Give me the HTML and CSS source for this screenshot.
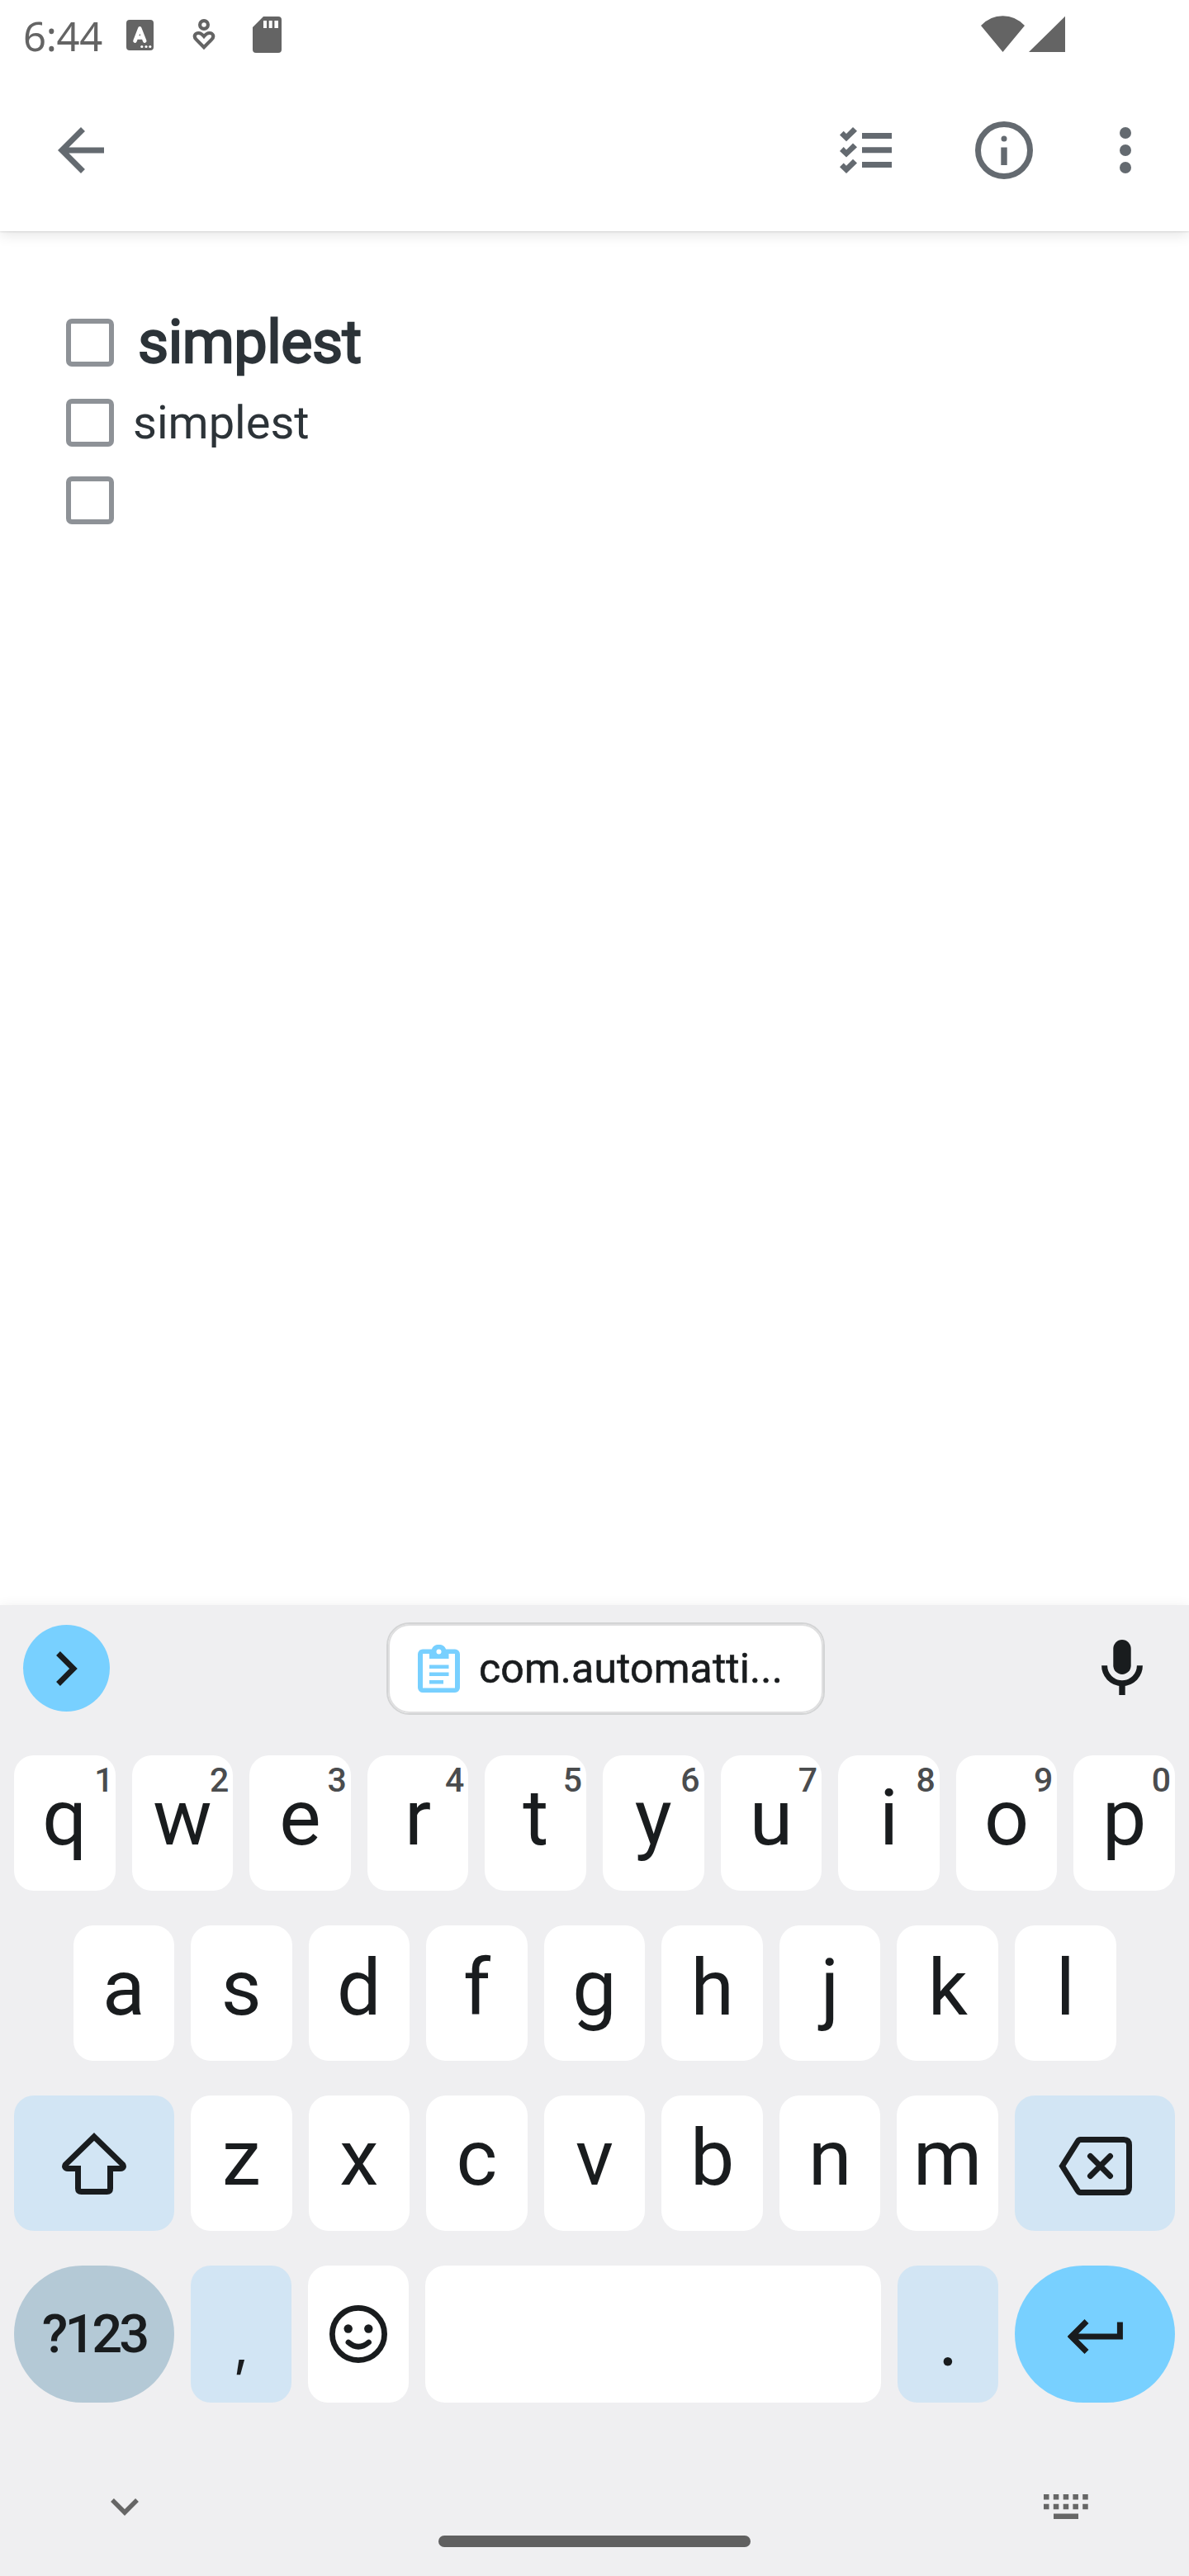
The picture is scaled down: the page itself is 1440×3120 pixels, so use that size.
FILE: index.html
```html
<!DOCTYPE html>
<html lang="en">
<head>
<meta charset="utf-8">
<title>Note</title>
<link rel="stylesheet" href="styles.css">
</head>
<body>
<div class="screen">
  <div class="status">
    <span class="clock">6:44</span>
    <svg class="st-a" viewBox="0 0 33 37"><rect width="33" height="37" rx="4"/><path class="cut" d="M10.5 25.5 16.3 10.500 22.200 25.500M12.700 21.500H20"/><g class="dots"><circle cx="18.800" cy="32.500" r="1.600"/><circle cx="24" cy="32.500" r="1.600"/><circle cx="28.800" cy="32.500" r="1.600"/></g></svg>
    <svg class="st-heart" viewBox="0 0 28 38"><circle cx="14" cy="7" r="4.900"/><path d="M14 34.300 4.500 24.600C1 21 3.300 17 7.500 17c2.800 0 4.500 1.600 6.500 4 2-2.400 3.700-4 6.500-4 4.200 0 6.500 4 3 7.600Z"/></svg>
    <svg class="st-sd" viewBox="0 0 35 44"><path fill-rule="evenodd" d="M13 0H31a4 4 0 0 1 4 4V40a4 4 0 0 1-4 4H4a4 4 0 0 1-4-4V13ZM13 5v9h4V5ZM19.700 5v9h4V5ZM26.400 5v9H31V5Z"/></svg>
    <svg class="st-net" viewBox="0 0 102 44"><path d="M0 12Q11 .2 26.500 .2T53 12L26.500 44ZM102 .7V44H58Z"/></svg>
  </div>
  <header class="appbar">
    <svg class="i-back" viewBox="0 0 24 24"><path d="M20 11H7.830l5.590-5.590L12 4l-8 8 8 8 1.410-1.410L7.830 13H20z"/></svg>
    <svg class="i-list" viewBox="0 0 63 56"><path d="M27 7h36v7H27zM27 24.200h36v7H27zM27 42h36v7H27z"/><path d="M0 9.500 4.700 4.700 8 8 16 0 21 4.800 8 17.200Z"/><path d="M0 28.900 4.700 24.100 8 27.400 16 19.400 21 24.200 8 36.600Z"/><path d="M0 48.200 4.700 43.400 8 46.700 16 38.700 21 43.500 8 55.900Z"/></svg>
    <svg class="i-info" viewBox="0 0 70 70"><circle class="ring" cx="35" cy="35" r="31.500"/><circle cx="35" cy="21" r="3.500"/><path d="M31.300 31.500h7.400v21.500h-7.400z"/></svg>
    <svg class="i-more" viewBox="0 0 14 56"><circle cx="7" cy="7" r="7"/><circle cx="7" cy="28" r="7"/><circle cx="7" cy="49" r="7"/></svg>
  </header>
  <main class="note">
    <div class="item item-title"><span class="box"></span><span class="title">simplest</span></div>
    <div class="item item-body"><span class="box"></span><span class="line">simplest</span></div>
    <div class="item"><span class="box"></span></div>
  </main>
  <section class="keyboard">
    <div class="strip">
      <span class="expand"><svg viewBox="0 0 26 42"><path d="M2.500 2.500 21 21 2.500 39.500"/></svg></span>
      <span class="chip">
        <svg viewBox="0 0 51 58"><path fill-rule="evenodd" d="M6 5.500H17C18 2 21 0 25.500 0S33 2 34 5.500H45a6 6 0 0 1 6 6V52a6 6 0 0 1-6 6H6a6 6 0 0 1-6-6V11.500a6 6 0 0 1 6-6ZM6 11V52.500H45V11H37.500V17H14V11ZM25.500 5.500a3 3 0 0 0 0 6 3 3 0 0 0 0-6Z"/><path d="M14 24.500h23.500v4.500H14zM14 33.500h23.500v4.500H14zM14 43h17v4.500H14z"/></svg>
        <span class="chip-text">com.automatti...</span>
      </span>
      <svg class="mic" viewBox="0 0 50 67"><rect x="14.300" y="0" width="21.400" height="42" rx="10.700"/><path class="arc" d="M3.600 31.300a21.400 21.400 0 0 0 42.800 0"/><path d="M21.300 54h7.400v13h-7.400z"/></svg>
    </div>
    <div class="row">
      <span class="key">q<sup>1</sup></span><span class="key">w<sup>2</sup></span><span class="key">e<sup>3</sup></span><span class="key">r<sup>4</sup></span><span class="key">t<sup>5</sup></span><span class="key">y<sup>6</sup></span><span class="key">u<sup>7</sup></span><span class="key">i<sup>8</sup></span><span class="key">o<sup>9</sup></span><span class="key">p<sup>0</sup></span>
    </div>
    <div class="row row-home">
      <span class="key">a</span><span class="key">s</span><span class="key">d</span><span class="key">f</span><span class="key">g</span><span class="key">h</span><span class="key">j</span><span class="key">k</span><span class="key">l</span>
    </div>
    <div class="row">
      <span class="key wide soft"><svg class="shift" viewBox="0 0 78 75"><path d="M39 5 73.500 38.500C75.500 41 74 43.500 71 43.500H58.500V67.500Q58.500 71.500 54.500 71.500H23.500Q19.500 71.500 19.500 67.500V43.500H7C4 43.500 2.500 41 4.500 38.500Z"/></svg></span>
      <span class="key">z</span><span class="key">x</span><span class="key">c</span><span class="key">v</span><span class="key">b</span><span class="key">n</span><span class="key">m</span>
      <span class="key wide soft"><svg class="erase" viewBox="0 0 89 71"><path d="M26.500 3.500H79Q85.500 3.500 85.500 10V61Q85.500 67.500 79 67.500H26.500Q24.500 67.500 23 65L4.500 35.500 23 6Q24.500 3.500 26.500 3.500Z"/><path class="x" d="M38.500 23.500 62.500 47.500M62.500 23.500 38.500 47.500"/></svg></span>
    </div>
    <div class="row row-last">
      <span class="key wide symbols">?123</span>
      <span class="key soft comma">,</span>
      <span class="key"><svg class="emoji" viewBox="0 0 70 70"><circle cx="35" cy="35" r="31.600"/><path d="M23 45q12 10.500 24.500 0"/><g class="eyes"><circle cx="22.700" cy="28.500" r="5.200"/><circle cx="47.300" cy="28.500" r="5.200"/></g></svg></span>
      <span class="key space"></span>
      <span class="key soft period">.</span>
      <span class="key wide enter"><svg viewBox="0 0 67 42"><path d="M23 2.500 4.500 21 23 39.500M5 21H63.400V3.500"/></svg></span>
    </div>
    <div class="navbar">
      <svg class="hide" viewBox="0 0 34 21"><path d="M2 2 17 17 32 2"/></svg>
      <span class="handle"></span>
      <svg class="switch" viewBox="0 0 54 30"><path d="M0 0h6.500v6.500H0zM11.800 0h6.500v6.500h-6.500zM23.700 0h6.500v6.500h-6.500zM35.400 0h6.500v6.500h-6.500zM47.200 0h6.500v6.500h-6.500zM0 11.800h6.500v6.500H0zM11.800 11.800h6.500v6.500h-6.500zM23.700 11.800h6.500v6.500h-6.500zM35.400 11.800h6.500v6.500h-6.500zM47.200 11.800h6.500v6.500h-6.500zM12 23.500h30V30H12z"/></svg>
    </div>
  </section>
</div>
</body>
</html>
```
FILE: styles.css
```css
* { box-sizing: border-box; }
body { margin: 0; background: #fff; font-family: Roboto, "Liberation Sans", sans-serif; }
svg { display: block; flex: none; }
.screen { width: 1440px; height: 3120px; display: flex; flex-direction: column; overflow: hidden; }

.status { height: 84px; flex: none; display: flex; align-items: flex-start; padding-left: 28px; fill: #646464; }
.clock { width: 125px; font: 49px/68px "Noto Sans", sans-serif; color: #646464; letter-spacing: -0.3px; padding-top: 9px; }
.st-a { width: 33px; height: 37px; margin-top: 24px; }
.st-a .cut { fill: none; stroke: #fff; stroke-width: 4.6; stroke-linecap: round; stroke-linejoin: round; }
.st-a .dots { fill: #fff; }
.st-heart { width: 28px; height: 38px; margin: 23px 0 0 47px; fill: none; stroke: #646464; stroke-width: 4.2; }
.st-sd { width: 35px; height: 44px; margin: 20px 0 0 45px; }
.st-net { width: 102px; height: 44px; margin: 19px 150px 0 auto; }

.appbar { height: 196px; flex: none; display: flex; align-items: center; padding: 0 70px 0 56px; fill: #646a70; background: #fff; box-shadow: 0 1px 2px rgba(0,0,0,.1), 0 4px 16px rgba(0,0,0,.11); clip-path: inset(0 0 -30px 0); }
.i-back { width: 84px; height: 84px; }
.i-list { width: 63px; height: 56px; margin-left: auto; }
.i-info { width: 70px; height: 70px; margin-left: 101px; }
.i-info .ring { fill: none; stroke: #646a70; stroke-width: 7; }
.i-more { width: 14px; height: 56px; margin-left: 105px; }

.note { flex: 1; padding: 106px 80px 0; color: #2c3338; }
.item { display: flex; height: 58px; align-items: center; }
.item-title { margin-bottom: 39px; }
.item-body { margin-bottom: 36px; }
.box { width: 58px; height: 58px; border: 6px solid #8e9297; border-radius: 7px; flex: none; }
.title { margin-left: 29px; font-size: 72px; line-height: 58px; letter-spacing: -0.5px; -webkit-text-stroke: 2.3px #2c3338; }
.line { margin-left: 23px; font-size: 56px; line-height: 60px; }

.keyboard { height: 1176px; flex: none; background: #efeff1; box-shadow: 0 0 14px rgba(0,0,0,.06); color: #191c1e; padding: 0 17px; display: flex; flex-direction: column; }
.strip { height: 182px; flex: none; display: flex; align-items: flex-start; padding: 21px 39px 0 11px; }
.expand { width: 105px; height: 105px; margin-top: 3px; border-radius: 50%; background: #78d0ff; display: flex; align-items: center; justify-content: center; }
.expand svg { width: 26px; height: 42px; fill: none; stroke: #191c1e; stroke-width: 6.8; }
.chip { width: 531px; height: 112px; margin-left: 335px; border: 2px solid #d3d4d5; box-shadow: inset 0 0 0 2px #dfdfe0; border-radius: 28px; background: #fff; display: flex; align-items: center; padding-left: 36px; }
.chip svg { width: 51px; height: 58px; fill: #78d0ff; }
.chip-text { margin-left: 23px; font-size: 50px; line-height: 60px; letter-spacing: 0.1px; white-space: nowrap; -webkit-text-stroke: 0.6px #191c1e; }
.mic { width: 50px; height: 67px; margin: 21px 0 0 auto; fill: #191c1e; }
.mic .arc { fill: none; stroke: #191c1e; stroke-width: 7; }

.row { display: flex; gap: 20px; height: 164px; margin-bottom: 42px; flex: none; }
.row-home { padding: 0 71.500px; }
.row-last { height: 166px; margin-bottom: 0; }
.key { flex: 1; min-width: 0; background: #fff; border-radius: 24px; display: flex; justify-content: center; position: relative; font-size: 95px; line-height: 151px; }
.key sup { position: absolute; right: 5px; top: 0; font-size: 41px; line-height: 60px; font-weight: 500; color: #4a4c4e; }
.key:first-child sup { right: 2px; }
.wide { flex: none; width: 194px; align-items: center; }
.soft { background: #d2e5f4; }
.key svg { fill: none; stroke: #191c1e; align-self: center; }
.shift { width: 78px; height: 75px; stroke-width: 7; }
.erase { width: 89px; height: 71px; margin-top: 7px; stroke-width: 7; }
.erase .x { stroke-linecap: round; }
.symbols { background: #b4c9d6; border-radius: 83px; font-size: 65px; line-height: 166px; font-weight: 500; letter-spacing: -4px; }
.comma { font-family: Inter, sans-serif; font-size: 66px; line-height: 194px; }
.period { font-family: Lato, sans-serif; font-size: 84px; line-height: 178px; }
.emoji { width: 70px; height: 70px; stroke-width: 6.8; stroke-linecap: round; }
.emoji .eyes { fill: #191c1e; stroke: none; }
.space { flex: none; width: 552px; }
.enter { background: #78d0ff; border-radius: 83px; }
.enter svg { width: 67px; height: 42px; margin-top: 6px; stroke-width: 7; }

.navbar { flex: 1; display: flex; align-items: flex-start; padding: 0 105px 0 117px; }
.hide { width: 34px; height: 21px; margin-top: 116px; fill: none; stroke: #666; stroke-width: 5.5; }
.handle { width: 378px; height: 14px; margin: 161px 0 0 363px; border-radius: 7px; background: #606060; }
.switch { width: 54px; height: 30px; margin: 111px 0 0 auto; fill: #666; }
```
